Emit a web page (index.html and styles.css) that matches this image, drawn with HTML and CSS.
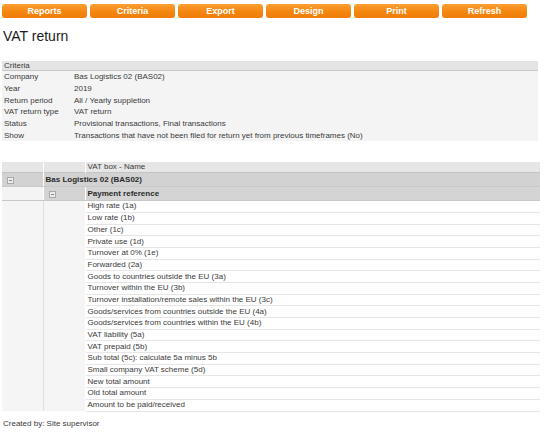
FILE: index.html
```html
<!DOCTYPE html>
<html>
<head>
<meta charset="utf-8">
<title>VAT return</title>
<link rel="stylesheet" href="styles.css">
</head>
<body>
<div class="toolbar">
  <div class="btn">Reports</div>
  <div class="btn">Criteria</div>
  <div class="btn">Export</div>
  <div class="btn">Design</div>
  <div class="btn">Print</div>
  <div class="btn">Refresh</div>
</div>
<h1 class="title">VAT return</h1>

<table class="criteria">
  <thead>
    <tr><th colspan="2">Criteria</th></tr>
  </thead>
  <tbody>
    <tr><td class="lbl">Company</td><td>Bas Logistics 02 (BAS02)</td></tr>
    <tr><td class="lbl">Year</td><td>2019</td></tr>
    <tr><td class="lbl">Return period</td><td>All / Yearly suppletion</td></tr>
    <tr><td class="lbl">VAT return type</td><td>VAT return</td></tr>
    <tr><td class="lbl">Status</td><td>Provisional transactions, Final transactions</td></tr>
    <tr><td class="lbl">Show</td><td>Transactions that have not been filed for return yet from previous timeframes (No)</td></tr>
  </tbody>
</table>

<table class="report">
  <colgroup>
    <col class="w1">
    <col class="w2">
    <col>
  </colgroup>
  <thead>
    <tr class="head"><td class="c1"></td><td class="c2"></td><td class="c3">VAT box - Name</td></tr>
  </thead>
  <tbody>
    <tr class="grp1"><td class="c1"><span class="minus"></span></td><td class="c3" colspan="2">Bas Logistics 02 (BAS02)</td></tr>
    <tr class="grp2"><td class="c1"></td><td class="c2"><span class="minus"></span></td><td class="c3">Payment reference</td></tr>
    <tr class="row"><td class="c1"></td><td class="c2"></td><td class="c3">High rate (1a)</td></tr>
    <tr class="row"><td class="c1"></td><td class="c2"></td><td class="c3">Low rate (1b)</td></tr>
    <tr class="row"><td class="c1"></td><td class="c2"></td><td class="c3">Other (1c)</td></tr>
    <tr class="row"><td class="c1"></td><td class="c2"></td><td class="c3">Private use (1d)</td></tr>
    <tr class="row"><td class="c1"></td><td class="c2"></td><td class="c3">Turnover at 0% (1e)</td></tr>
    <tr class="row"><td class="c1"></td><td class="c2"></td><td class="c3">Forwarded (2a)</td></tr>
    <tr class="row"><td class="c1"></td><td class="c2"></td><td class="c3">Goods to countries outside the EU (3a)</td></tr>
    <tr class="row"><td class="c1"></td><td class="c2"></td><td class="c3">Turnover within the EU (3b)</td></tr>
    <tr class="row"><td class="c1"></td><td class="c2"></td><td class="c3">Turnover installation/remote sales within the EU (3c)</td></tr>
    <tr class="row"><td class="c1"></td><td class="c2"></td><td class="c3">Goods/services from countries outside the EU (4a)</td></tr>
    <tr class="row"><td class="c1"></td><td class="c2"></td><td class="c3">Goods/services from countries within the EU (4b)</td></tr>
    <tr class="row"><td class="c1"></td><td class="c2"></td><td class="c3">VAT liability (5a)</td></tr>
    <tr class="row"><td class="c1"></td><td class="c2"></td><td class="c3">VAT prepaid (5b)</td></tr>
    <tr class="row"><td class="c1"></td><td class="c2"></td><td class="c3">Sub total (5c): calculate 5a minus 5b</td></tr>
    <tr class="row"><td class="c1"></td><td class="c2"></td><td class="c3">Small company VAT scheme (5d)</td></tr>
    <tr class="row"><td class="c1"></td><td class="c2"></td><td class="c3">New total amount</td></tr>
    <tr class="row"><td class="c1"></td><td class="c2"></td><td class="c3">Old total amount</td></tr>
    <tr class="row"><td class="c1"></td><td class="c2"></td><td class="c3">Amount to be paid/received</td></tr>
  </tbody>
</table>

<p class="footer">Created by: Site supervisor</p>
</body>
</html>
```

FILE: styles.css
```css
body {
  margin: 0;
  padding: 4px 2px 0 2px;
  font-family: "Liberation Sans", Arial, sans-serif;
  font-size: 8px;
  color: #3a3a3a;
  background: #fff;
}

.toolbar {
  display: flex;
  gap: 3px;
}

.btn {
  width: 85px;
  height: 14px;
  border-radius: 3px;
  background: linear-gradient(#fca035, #f4860f 55%, #ef7c0a);
  color: #fff;
  font-weight: bold;
  font-size: 9px;
  line-height: 14px;
  text-align: center;
}

.title {
  margin: 10px 0 0 1px;
  font-size: 14px;
  line-height: 16px;
  font-weight: normal;
  color: #1a1a1a;
}

.criteria {
  margin-top: 17px;
  width: 536px;
  border-collapse: collapse;
}

.criteria th {
  height: 9px;
  padding: 0 2px;
  text-align: left;
  font-weight: normal;
  background: #e4e4e4;
  border-bottom: 1px solid #c8c8c8;
  line-height: 9px;
}

.criteria td {
  height: 11.7px;
  padding: 0 2px;
  background: #f4f4f4;
  line-height: 11px;
  white-space: nowrap;
}

.criteria td.lbl {
  width: 66px;
}

.report {
  margin-top: 21px;
  width: 538px;
  border-collapse: collapse;
  table-layout: fixed;
}

.report .w1 {
  width: 41px;
}

.report .w2 {
  width: 42px;
}

.report td {
  padding: 0;
  white-space: nowrap;
  overflow: hidden;
}

.report .c1,
.report .c2 {
  border-right: 1px solid #fff;
}

.report .c3 {
  padding-left: 2px;
}

.head td {
  height: 10px;
  background: #e6e6e6;
  line-height: 10px;
}

.grp1 td {
  height: 13px;
  background: #d2d2d2;
  font-weight: bold;
  color: #2a2a2a;
  border-top: 1px solid #c4c4c4;
  border-bottom: 1px solid #c8c8c8;
}

.grp1 .c1 {
  padding-left: 5px;
}

.grp2 td {
  height: 13px;
  background: #d4d4d4;
  font-weight: bold;
  color: #2a2a2a;
  border-bottom: 1px solid #c8c8c8;
}

.grp2 .c1 {
  background: #f4f4f4;
}

.grp2 .c2 {
  padding-left: 5px;
}

.row td {
  height: 10.7px;
  line-height: 10px;
  background: #fff;
  border-bottom: 1px solid #e6e6e6;
}

.row .c1,
.row .c2 {
  background: #f5f5f5;
  border-bottom: none;
}

.row .c1 {
  border-right: 1px solid #e0e0e0;
}

.minus {
  display: inline-block;
  vertical-align: middle;
  position: relative;
  width: 5px;
  height: 5px;
  border: 1px solid #a9a9a9;
  background: #ececec;
}

.minus::after {
  content: "";
  position: absolute;
  left: 1px;
  right: 1px;
  top: 2px;
  height: 1px;
  background: #888;
}

.footer {
  margin: 7px 0 0 1px;
  line-height: 10px;
}
```
